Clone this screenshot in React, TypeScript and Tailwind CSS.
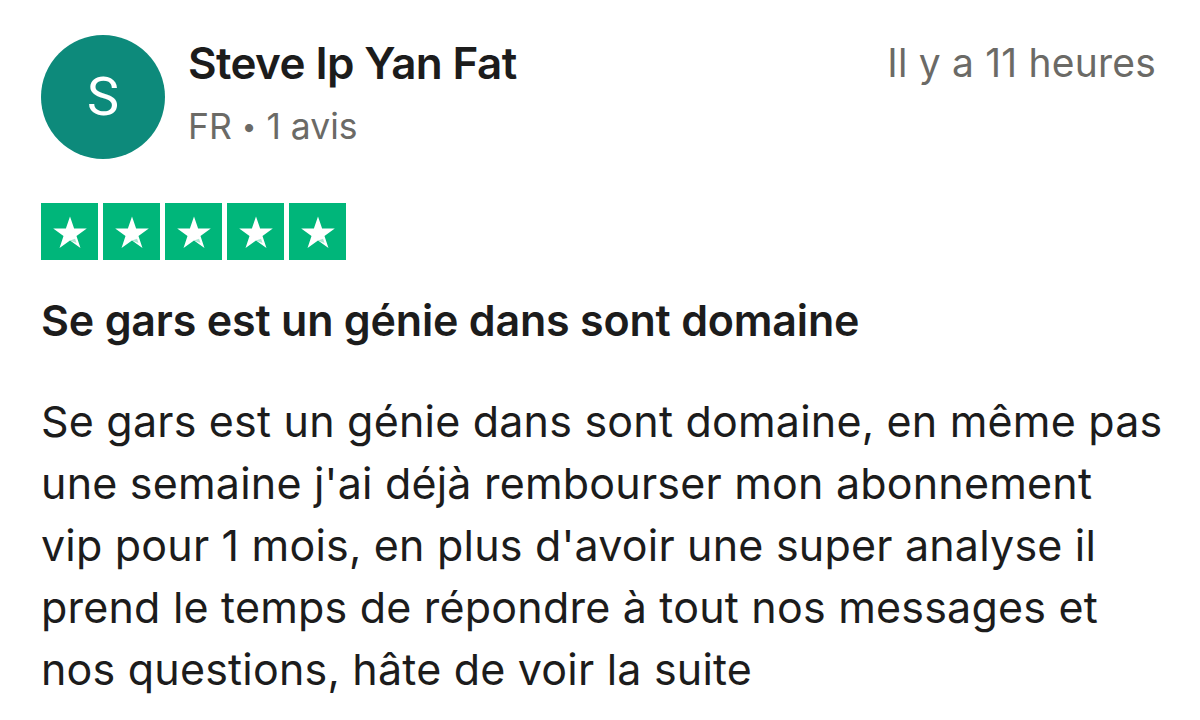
import React from "react";

function Star() {
  return (
    <div className="w-[57px] h-[57px] bg-[#00b67a] flex items-center justify-center">
      <svg width="38" height="38" viewBox="0 0 24 24">
        <path d="M12 2.2l2.6 7.6h8l-6.5 4.7 2.5 7.6L12 17.4l-6.6 4.7 2.5-7.6L1.4 9.8h8z" fill="#fff" />
        <path d="M15.2 16.3l0.9 2.6L12 17.4z" fill="#00b67a" opacity="0.35" />
      </svg>
    </div>
  );
}

export default function App() {
  const lines = [
    "Se gars est un génie dans sont domaine, en même pas",
    "une semaine j'ai déjà rembourser mon abonnement",
    "vip pour 1 mois, en plus d'avoir une super analyse il",
    "prend le temps de répondre à tout nos messages et",
    "nos questions, hâte de voir la suite",
  ];
  return (
    <div className="w-[1200px] h-[720px] bg-white overflow-hidden pl-[41px] pr-[44px] pt-[35px] text-[#1c1c1c] font-['Inter',sans-serif]">
      <div className="flex items-start">
        <div className="w-[124px] h-[124px] rounded-full bg-[#0d8a7b] flex items-center justify-center shrink-0">
          <span className="text-white text-[54px] font-['Roboto',sans-serif] leading-none">S</span>
        </div>
        <div className="ml-[23px] flex-1">
          <div className="text-[44px] font-semibold leading-[56px] tracking-[-0.6px]">Steve Ip Yan Fat</div>
          <div className="text-[35.5px] text-[#6b6a66] leading-[44px] mt-[14px]">
            FR <span className="text-[26px] align-[3px]">•</span> 1 avis
          </div>
        </div>
        <div className="text-[39px] text-[#6b6a66] leading-[56px] tracking-[0.2px]">Il y a 11 heures</div>
      </div>
      <div className="flex gap-[5px] mt-[44px]">
        <Star />
        <Star />
        <Star />
        <Star />
        <Star />
      </div>
      <div className="mt-[33px] text-[43px] font-semibold leading-[54px] tracking-[-0.2px]">Se gars est un génie dans sont domaine</div>
      <div className="mt-[43px] text-[43px] leading-[62px] tracking-[0.2px]">
        {lines.map((l, i) => (
          <div key={i} className="whitespace-nowrap">{l}</div>
        ))}
      </div>
    </div>
  );
}
